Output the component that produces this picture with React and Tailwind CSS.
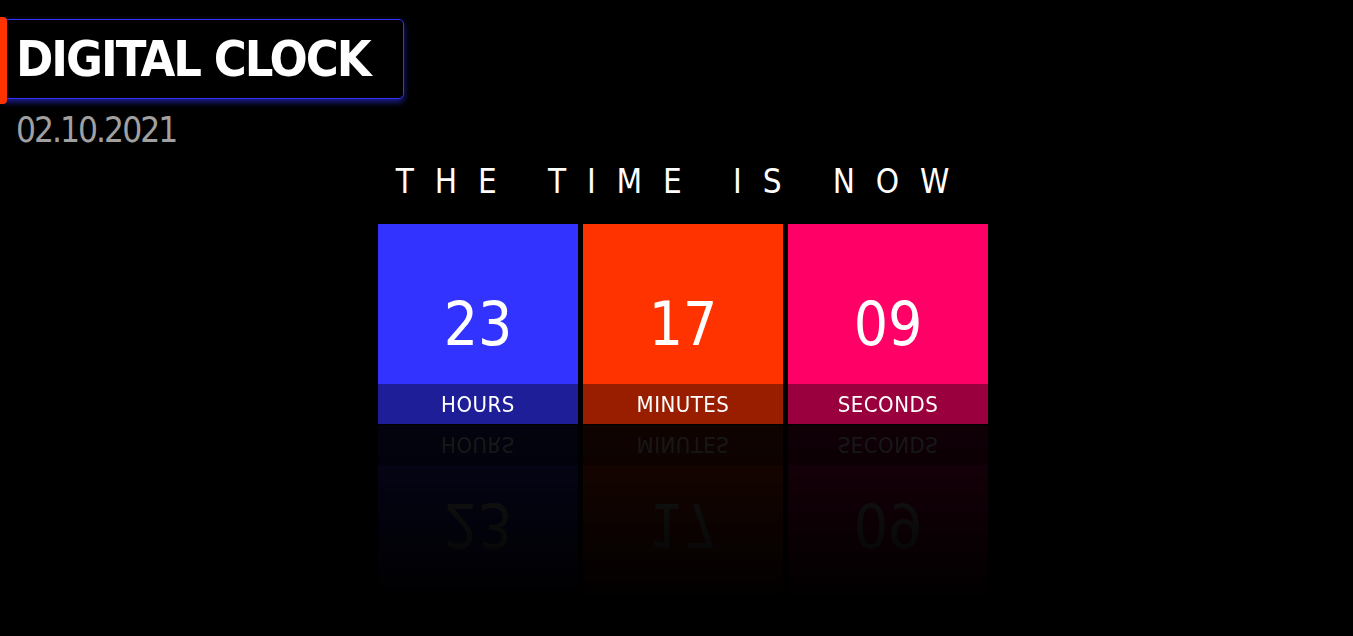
import React from 'react';

const units = [
  { value: '23', label: 'HOURS', color: 'bg-[#3333ff]' },
  { value: '17', label: 'MINUTES', color: 'bg-[#ff3300]' },
  { value: '09', label: 'SECONDS', color: 'bg-[#ff0066]' },
];

function TimeBox({ value, label, color }) {
  return (
    <div
      className={`${color} relative w-[200px] h-[200px] flex items-center justify-center [-webkit-box-reflect:below_1px_linear-gradient(transparent_10%,rgba(0,0,0,0.1))]`}
    >
      <div className="text-white text-[60px] leading-none">{value}</div>
      <div className="absolute left-0 right-0 bottom-0 h-[40px] bg-black/40 flex items-center justify-center text-white text-[22px] tracking-[0.5px]">
        {label}
      </div>
    </div>
  );
}

export default function App() {
  return (
    <div className="min-h-screen bg-black font-['DejaVu_Sans_Condensed','Roboto',sans-serif] overflow-hidden">
      {/* Header */}
      <div className="pt-[19px]">
        <div className="relative w-[404px]">
          <div className="absolute left-0 top-[-2px] w-[7px] h-[87px] bg-[#ff3300] rounded-r-[4px]" />
          <div className="h-[80px] border border-[#3333ff] rounded-[5px] shadow-[0_3px_6px_rgba(51,51,255,0.6)] flex items-center pl-[15px]">
            <h1 className="text-white text-[50px] font-bold leading-none tracking-[-2px]">DIGITAL CLOCK</h1>
          </div>
        </div>
        <div className="pl-[16px] mt-[13px] text-[#a0a0a0] text-[35px] leading-[36px] tracking-[-2px]">02.10.2021</div>
      </div>

      {/* Clock */}
      <div className="flex flex-col items-center mt-[10px] ml-[13px]">
        <h2 className="text-white text-[33px] leading-[48px] tracking-[0.633em]">THE TIME IS NOW</h2>
        <div className="flex gap-[5px] mt-[18px]">
          {units.map((u) => (
            <TimeBox key={u.label} {...u} />
          ))}
        </div>
      </div>
    </div>
  );
}
